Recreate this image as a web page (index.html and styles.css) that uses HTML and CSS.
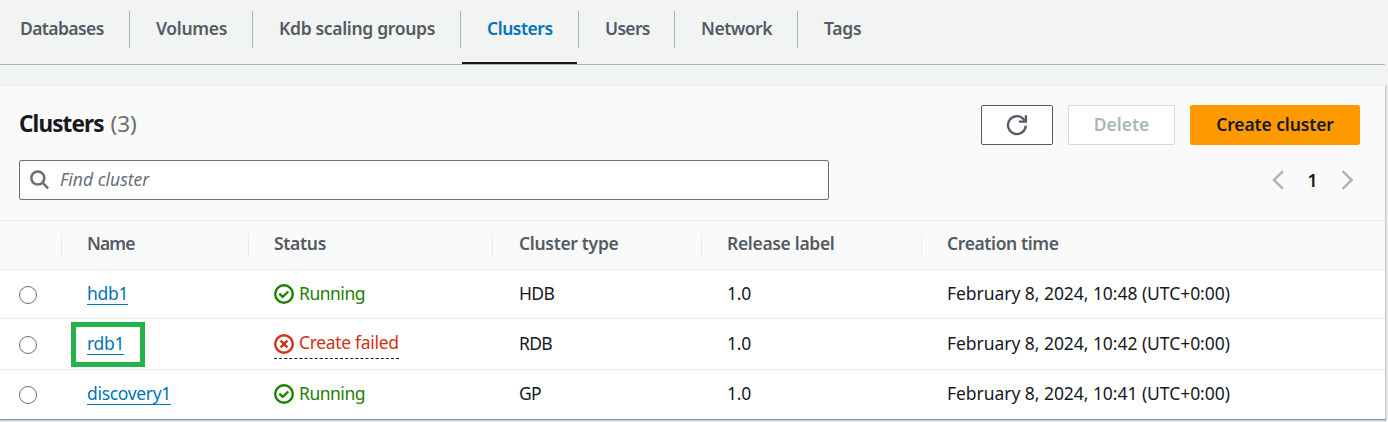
FILE: index.html
```html
<!DOCTYPE html>
<html lang="en">
<head>
<meta charset="utf-8">
<title>Clusters</title>
<link rel="stylesheet" href="styles.css">
</head>
<body>
<nav class="tabs">
  <a class="tab first"><span class="t6">Databases</span></a>
  <a class="tab"><span class="t3">Volumes</span></a>
  <a class="tab"><span class="t3">Kdb scaling groups</span></a>
  <a class="tab active"><span class="t5">Clusters</span></a>
  <a class="tab"><span class="t7">Users</span></a>
  <a class="tab"><span class="t5">Network</span></a>
  <a class="tab last"><span class="t2">Tags</span></a>
</nav>
<main class="panel">
  <header class="panel-head">
    <div class="title-row">
      <h2 class="title"><span class="title-name">Clusters</span> <span class="count">(3)</span></h2>
      <div class="actions">
        <button class="btn refresh" aria-label="Refresh">
          <svg width="22" height="22" viewBox="0 0 22 22" fill="none" stroke="#545b64" stroke-width="2.3"><path d="M19.8 11.6A8.9 8.9 0 1 1 17.4 5L19 7.2"/><path d="M19.9 1.3v6.3h-7"/></svg>
        </button>
        <button class="btn disabled"><span>Delete</span></button>
        <button class="btn primary"><span class="t1">Create cluster</span></button>
      </div>
    </div>
    <div class="filter-row">
      <div class="search">
        <svg width="20" height="20" viewBox="0 0 20 20" fill="none" stroke="#687078" stroke-width="2.6"><circle cx="7.8" cy="8" r="6.5"/><path d="M12.5 12.7l5.6 5.6"/></svg>
        <span class="placeholder">Find cluster</span>
      </div>
      <div class="pager">
        <svg width="12" height="20" viewBox="0 0 12 20" fill="none" stroke="#aab7b8" stroke-width="2.5"><path d="M11 1.2L2 10l9 8.8"/></svg>
        <span class="page">1</span>
        <svg width="12" height="20" viewBox="0 0 12 20" fill="none" stroke="#aab7b8" stroke-width="2.5"><path d="M1.6 1.2l9 8.8-9 8.8"/></svg>
      </div>
    </div>
  </header>
  <section class="table">
    <div class="row head">
      <div class="cell pick"></div>
      <div class="cell"><span class="t8">Name</span></div>
      <div class="cell"><span class="t3">Status</span></div>
      <div class="cell nudge"><span class="t3">Cluster type</span></div>
      <div class="cell"><span class="t3">Release label</span></div>
      <div class="cell"><span class="t4">Creation time</span></div>
    </div>
    <div class="row">
      <div class="cell pick"><i class="radio"></i></div>
      <div class="cell"><a class="link t3">hdb1</a></div>
      <div class="cell"><span class="status ok"><svg width="20" height="20" viewBox="0 0 20 20" fill="none" stroke="currentColor" stroke-width="2.4"><circle cx="10" cy="10" r="8.8"/><path d="M5.3 9.7l3.4 3.2 5.6-5.4"/></svg><span class="t5">Running</span></span></div>
      <div class="cell nudge"><span class="t7">HDB</span></div>
      <div class="cell"><span class="t2">1.0</span></div>
      <div class="cell"><span class="date">February 8, 2024, 10:48 (UTC+0:00)</span></div>
    </div>
    <div class="row tall">
      <div class="cell pick"><i class="radio"></i></div>
      <div class="cell marked"><a class="link t3">rdb1</a></div>
      <div class="cell"><span class="status failed"><svg width="20" height="20" viewBox="0 0 20 20" fill="none" stroke="currentColor" stroke-width="2.4"><circle cx="10" cy="10" r="8.8"/><path d="M6.6 6.6l6.8 6.8M13.4 6.6l-6.8 6.8"/></svg><span class="t3">Create failed</span></span></div>
      <div class="cell nudge"><span class="t7">RDB</span></div>
      <div class="cell"><span class="t2">1.0</span></div>
      <div class="cell"><span class="date">February 8, 2024, 10:42 (UTC+0:00)</span></div>
    </div>
    <div class="row">
      <div class="cell pick"><i class="radio"></i></div>
      <div class="cell"><a class="link t3">discovery1</a></div>
      <div class="cell"><span class="status ok"><svg width="20" height="20" viewBox="0 0 20 20" fill="none" stroke="currentColor" stroke-width="2.4"><circle cx="10" cy="10" r="8.8"/><path d="M5.3 9.7l3.4 3.2 5.6-5.4"/></svg><span class="t5">Running</span></span></div>
      <div class="cell nudge"><span class="t7">GP</span></div>
      <div class="cell"><span class="t2">1.0</span></div>
      <div class="cell"><span class="date">February 8, 2024, 10:41 (UTC+0:00)</span></div>
    </div>
  </section>
</main>
</body>
</html>
```
FILE: styles.css
```css
*, *::before, *::after { box-sizing: border-box; }
body {
  margin: 0;
  height: 422px;
  overflow: hidden;
  background: #f2f3f3;
  color: #16191f;
  font: 400 17.5px/24px "Noto Sans", "Open Sans", sans-serif;
  white-space: nowrap;
}
svg { display: block; flex: none; }

/* Tracking steps, tightest last */
.t1 { letter-spacing: -0.12px; }
.t2 { letter-spacing: -0.22px; }
.t3 { letter-spacing: -0.32px; }
.t4 { letter-spacing: -0.38px; }
.t5 { letter-spacing: -0.49px; }
.t6 { letter-spacing: -0.6px; }
.t7 { letter-spacing: -0.68px; }
.t8 { letter-spacing: -0.9px; }

.tabs {
  display: grid;
  grid-template-columns: 130px 123px 208px 118px 96px 123px 1fr;
  width: 1385px;
  height: 65px;
  padding-top: 11px;
  border-bottom: 1px solid #aab7b8;
  color: #545b64;
  font-weight: 600;
}
.tab {
  height: 37px;
  padding: 5px 0 0 26px;
  border-right: 1px solid #aab7b8;
}
.tab.first { padding-left: 20px; }
.tab.last { border-right: 0; }
.tab.active { position: relative; color: #0073bb; }
.tab.active::after {
  content: "";
  position: absolute;
  left: 1px;
  right: 1px;
  top: 51px;
  height: 2px;
  background: #16191f;
}

.panel {
  width: 1386px;
  height: 335px;
  margin-top: 20px;
  background: #fff;
  border-top: 1px solid #eaeded;
  border-right: 1px solid #c3cacb;
  border-bottom: 1px solid #879596;
  box-shadow: 0 1px 1px #c8cecf, 1px 1px 1px #dfe3e3;
}
.panel-head {
  height: 135px;
  padding: 19px 25px 0 19px;
  background: #fafafa;
  border-bottom: 1px solid #eaeded;
}
.title-row { display: flex; justify-content: space-between; height: 40px; }
.title { margin: 5px 0 0; font-size: 22.5px; line-height: 28px; font-weight: 700; }
.title-name { letter-spacing: -0.88px; }
.count { margin-left: 1px; color: #687078; font-weight: 400; }
.actions { display: flex; gap: 15px; }
.btn {
  display: flex;
  align-items: center;
  justify-content: center;
  height: 40px;
  padding: 0;
  border: 1px solid #545b64;
  border-radius: 2px;
  background: #fff;
  font: inherit;
  font-weight: 600;
}
.btn span { padding-bottom: 3px; }
.refresh { width: 72px; }
.disabled { width: 107px; border-color: #d5dbdb; color: #aab7b8; }
.primary { width: 170px; border-color: #ff9900; background: #ff9900; color: #16191f; }

.filter-row { display: flex; justify-content: space-between; margin-top: 15px; }
.search {
  display: flex;
  align-items: center;
  gap: 10px;
  width: 810px;
  height: 40px;
  padding-left: 10px;
  background: #fff;
  border: 1px solid #687078;
  border-radius: 2px;
}
.placeholder { padding-bottom: 2px; color: #687078; font-style: italic; }
.pager { display: flex; align-items: center; padding-right: 7px; }
.page { width: 57px; padding-bottom: 1px; text-align: center; font-weight: 600; }

.row {
  display: grid;
  grid-template-columns: 62px 187px 244px 209px 220px 1fr;
  align-items: center;
  height: 49px;
  border-bottom: 1px solid #eaeded;
}
.row.tall { height: 51px; }
.row:last-child { height: 48px; border-bottom: 0; }
.cell { padding: 0 0 2px 25px; }
.cell.nudge { padding-left: 26px; }
.cell.pick { padding: 0 0 0 19px; }
.head { background: #fafafa; color: #545b64; font-weight: 600; }
.head .cell { height: 25px; line-height: 20px; border-right: 1px solid #eaeded; }
.head .cell:last-child { border-right: 0; }
.radio {
  display: block;
  width: 18px;
  height: 18px;
  margin-top: 1px;
  border: 1px solid #687078;
  border-radius: 50%;
}
.link {
  display: inline-block;
  height: 24px;
  color: #0073bb;
  border-bottom: 1px solid #0073bb;
  vertical-align: top;
}
.marked { position: relative; }
.marked::before {
  content: "";
  position: absolute;
  left: 9px;
  top: -9px;
  width: 74px;
  height: 45px;
  border: 5px solid #22b14c;
}
.status { display: inline-flex; align-items: flex-start; gap: 5px; height: 24px; vertical-align: top; }
.status svg { margin-top: 3px; }
.date { letter-spacing: -0.05px; }
.ok { color: #1d8102; }
.failed { height: 31px; padding-top: 2px; color: #d13212; border-bottom: 1px dashed #16191f; }
.failed svg { margin-top: 4px; }
```
